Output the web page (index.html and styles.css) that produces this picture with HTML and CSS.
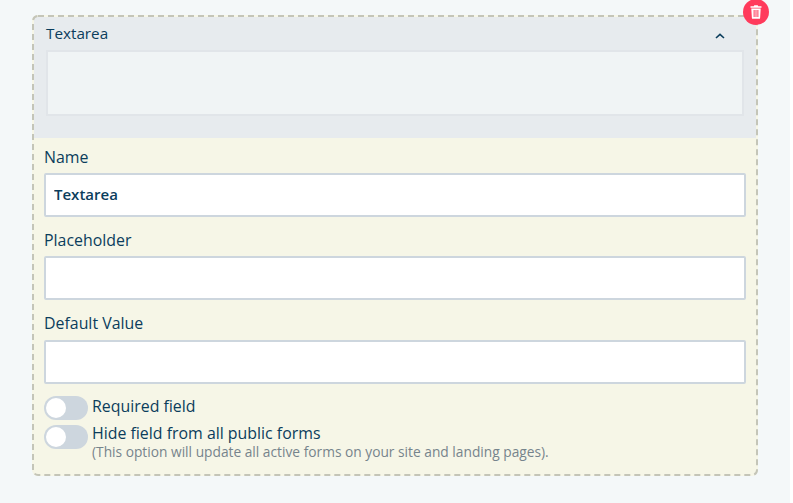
FILE: index.html
```html
<!DOCTYPE html>
<html lang="en">
<head>
<meta charset="utf-8">
<title>Textarea field</title>
<link rel="stylesheet" href="styles.css">
</head>
<body>
<div class="page">
  <section class="card">
    <svg class="dashes" width="726" height="461" aria-hidden="true"><rect x="1" y="1" width="724" height="459" rx="5" fill="none" stroke="#c4c5b8" stroke-width="2" stroke-dasharray="6 4"/></svg>
    <button class="delete" aria-label="Delete">
      <svg viewBox="0 0 14 16" width="12" height="14"><path fill="#fff" d="M5 0h4l.6 1.2H13.4v1.7H.6V1.2h3.8zM1.5 3.9h11l-.7 11a1.1 1.1 0 0 1-1.1 1H3.3a1.1 1.1 0 0 1-1.1-1zM4.2 5.6v8.2h1.2V5.6zm2.2 0v8.2h1.2V5.6zm2.2 0v8.2h1.2V5.6z"/></svg>
    </button>
    <header class="preview">
      <div class="preview-head">
        <span>Textarea</span>
        <svg class="chevron" viewBox="0 0 10 6" width="10" height="6"><path d="M1 5l4-3.6L9 5" fill="none" stroke="#0b3d5c" stroke-width="1.6"/></svg>
      </div>
      <div class="preview-box"></div>
    </header>
    <div class="settings">
      <label class="field"><span class="label">Name</span><input class="input" value="Textarea"></label>
      <label class="field"><span class="label">Placeholder</span><input class="input"></label>
      <label class="field field-last"><span class="label">Default Value</span><input class="input"></label>
      <div class="toggle-row first">
        <span class="toggle"><span class="knob"></span></span>
        <span class="toggle-text">Required field</span>
      </div>
      <div class="toggle-row second">
        <span class="toggle"><span class="knob"></span></span>
        <span class="toggle-text">Hide field from all public forms<small>(This option will update all active forms on your site and landing pages).</small></span>
      </div>
    </div>
  </section>
</div>
</body>
</html>
```
FILE: styles.css
```css
html, body { margin: 0; padding: 0; background: #fff; }
body { font-family: "Open Sans", "Liberation Sans", sans-serif; color: #0b3d5c; }
.page { width: 790px; height: 503px; box-sizing: border-box; background: #f4f8f9; padding: 15px 32px 0; }
.card { position: relative; width: 726px; height: 461px; box-sizing: border-box; border: 2px solid transparent; border-radius: 6px; background: #f6f6e7; }
.dashes { position: absolute; left: -2px; top: -2px; pointer-events: none; z-index: 1; }
.delete { position: absolute; z-index: 2; top: -18px; right: -13px; width: 26px; height: 26px; padding: 0; border: 0; border-radius: 50%; background: #ff3b5c; display: flex; align-items: center; justify-content: center; }
.preview { height: 121px; box-sizing: border-box; background: #e7ebee; padding: 0 12px; }
.preview-head { height: 33px; display: flex; align-items: center; justify-content: space-between; font-size: 15.25px; padding-right: 19px; }
.preview-head span { margin-top: -2px; }
.chevron { margin-top: 4px; }
.preview-box { height: 66px; box-sizing: border-box; border: 2px solid #e1e5e9; background: #f0f4f5; }
.settings { padding: 8px 10px 0; }
.field { display: block; height: 83px; }
.field-last { height: 84.5px; }
.label { display: block; height: 26px; line-height: 22px; font-size: 15.9px; }
.field .input { margin-top: 1px; }
.field-last .input { margin-top: 2px; }
.input { display: block; width: 100%; height: 44px; box-sizing: border-box; border: 2px solid #cdd6de; border-radius: 2px; background: #fff; padding: 0 8px 2px; font: 600 15px "Open Sans", "Liberation Sans", sans-serif; color: #0b3d5c; outline: 0; }
.toggle-row { display: flex; align-items: flex-start; gap: 4px; margin-top: 5px; }
.toggle-row.first { margin-top: -1px; height: 24px; }
.toggle { flex: none; width: 44px; height: 24px; border-radius: 12px; background: #cdd6de; position: relative; }
.knob { position: absolute; left: 2px; top: 2px; width: 20px; height: 20px; border-radius: 50%; background: #fff; }
.toggle-text { font-size: 15.9px; line-height: 20px; }
.second .toggle-text { margin-top: -2px; }
.toggle-text small { display: block; margin-top: 1px; font-size: 13.75px; line-height: 16px; color: #76848c; }
```
